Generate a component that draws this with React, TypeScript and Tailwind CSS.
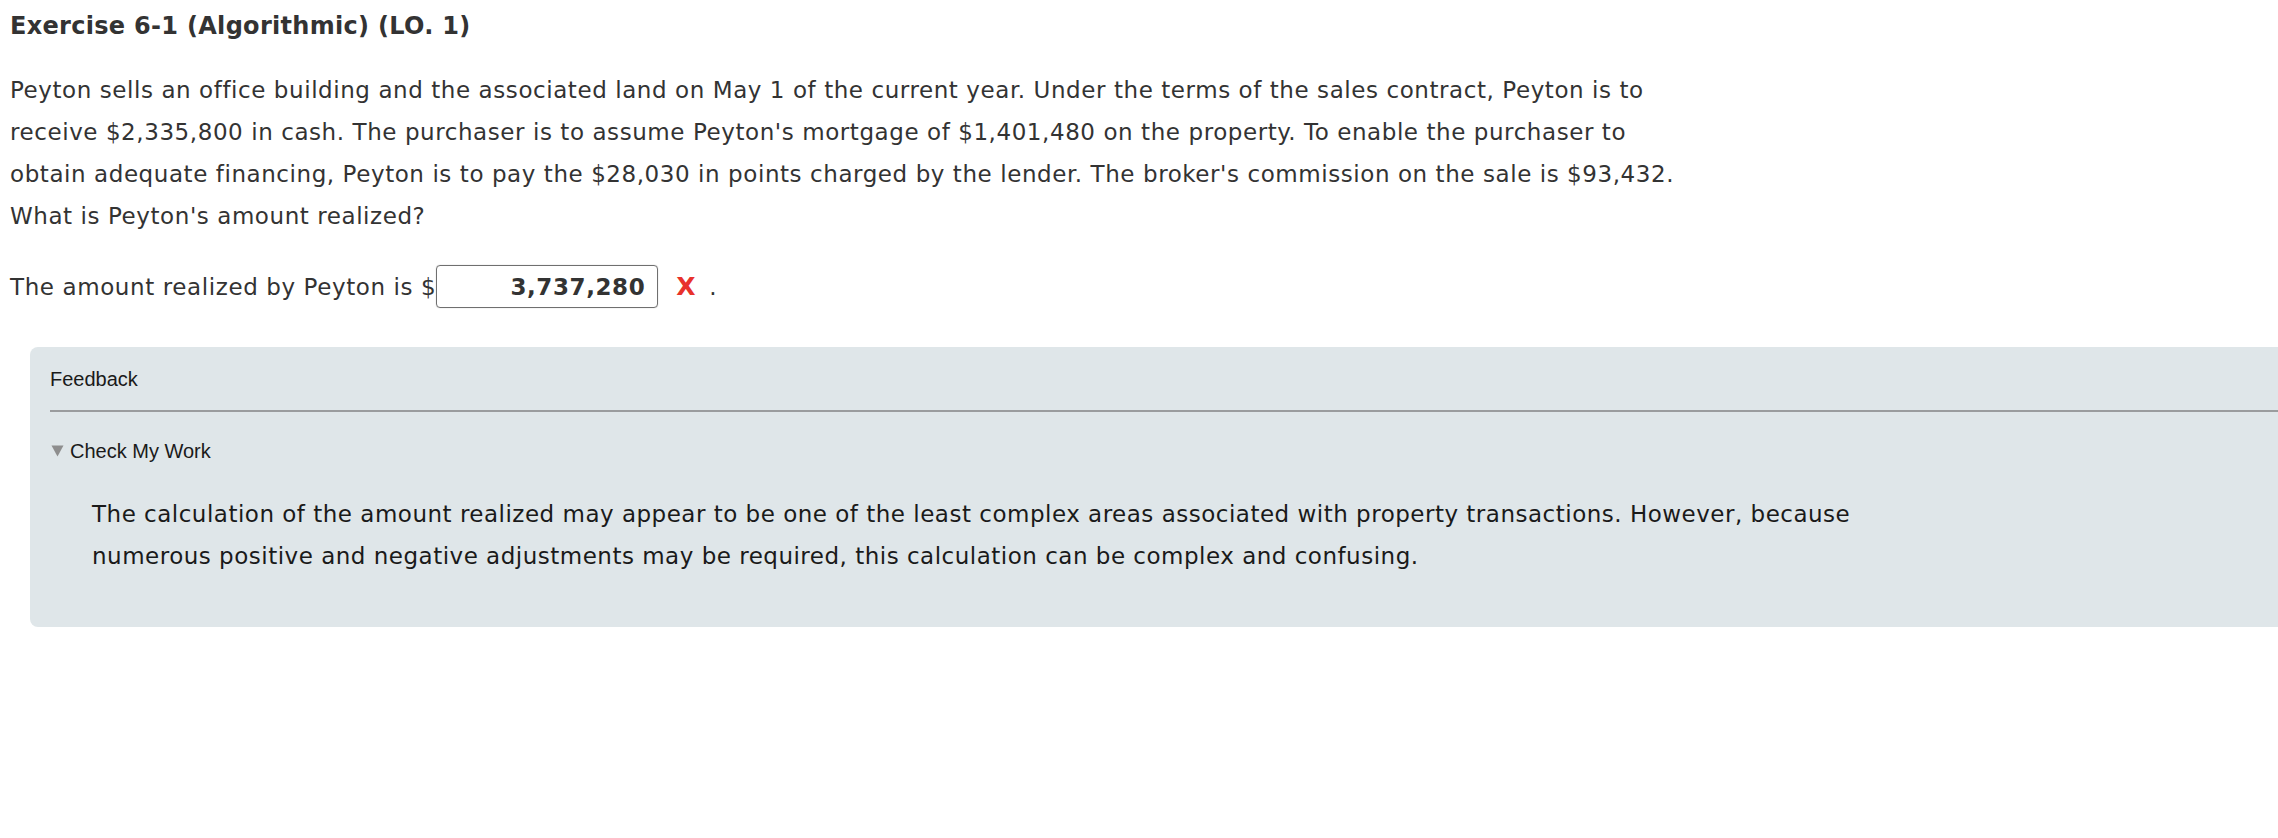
export default function App() {
  return (
    <div className="min-h-screen w-full overflow-hidden bg-white font-['DejaVu_Sans',Verdana,sans-serif] text-[#333]">
      <div className="pl-[10px] pt-[12px]">
        <h1 className="text-[24px] font-bold leading-[28px] tracking-[0.3px]">Exercise 6-1 (Algorithmic) (LO. 1)</h1>
        <p className="mt-[29px] w-[1690px] text-[23px] leading-[42px] tracking-[0.57px]">
          Peyton sells an office building and the associated land on May 1 of the current year. Under the terms of the
          sales contract, Peyton is to receive $2,335,800 in cash. The purchaser is to assume Peyton's mortgage of
          $1,401,480 on the property. To enable the purchaser to obtain adequate financing, Peyton is to pay the $28,030
          in points charged by the lender. The broker's commission on the sale is $93,432. What is Peyton's amount
          realized?
        </p>
        <div className="mt-[28px] flex items-center text-[23px] leading-[42px] tracking-[0.6px]">
          <span>The amount realized by Peyton is $</span>
          <span className="flex h-[43px] w-[222px] items-center justify-end rounded-[4px] border-[1.5px] border-[#6f6f6f] pr-[12px] font-bold shadow-[0_0_1px_rgba(0,0,0,0.35)]">
            3,737,280
          </span>
          <span className="ml-[18px] text-[25px] font-bold text-[#e8322b]">X</span>
          <span className="ml-[13px]">.</span>
        </div>
      </div>

      <section className="ml-[30px] mt-[39px] w-[2300px] rounded-l-[8px] bg-[#dfe6e9] pb-[50px] pl-[20px] pt-[21px]">
        <div className="font-['Liberation_Sans',Arial,sans-serif] text-[20px] leading-[22px] text-[#1a1a1a]">Feedback</div>
        <div className="mt-[20px] h-[2px] bg-[#9a9c9e]" />
        <div className="mt-[28px] flex items-center font-['Liberation_Sans',Arial,sans-serif] text-[20px] leading-[22px] text-[#1a1a1a]">
          <svg width="13" height="12" viewBox="0 0 13 12" className="ml-[1px] mr-[6px]">
            <polygon points="0.5,0.5 12.5,0.5 6.5,11.5" fill="#8e8e8e" />
          </svg>
          <span>Check My Work</span>
        </div>
        <p className="mt-[31px] w-[1850px] pl-[42px] text-[23px] leading-[42px] tracking-[0.5px] text-[#1a1a1a]">
          The calculation of the amount realized may appear to be one of the least complex areas associated with
          property transactions. However, because numerous positive and negative adjustments may be required, this
          calculation can be complex and confusing.
        </p>
      </section>
    </div>
  );
}
